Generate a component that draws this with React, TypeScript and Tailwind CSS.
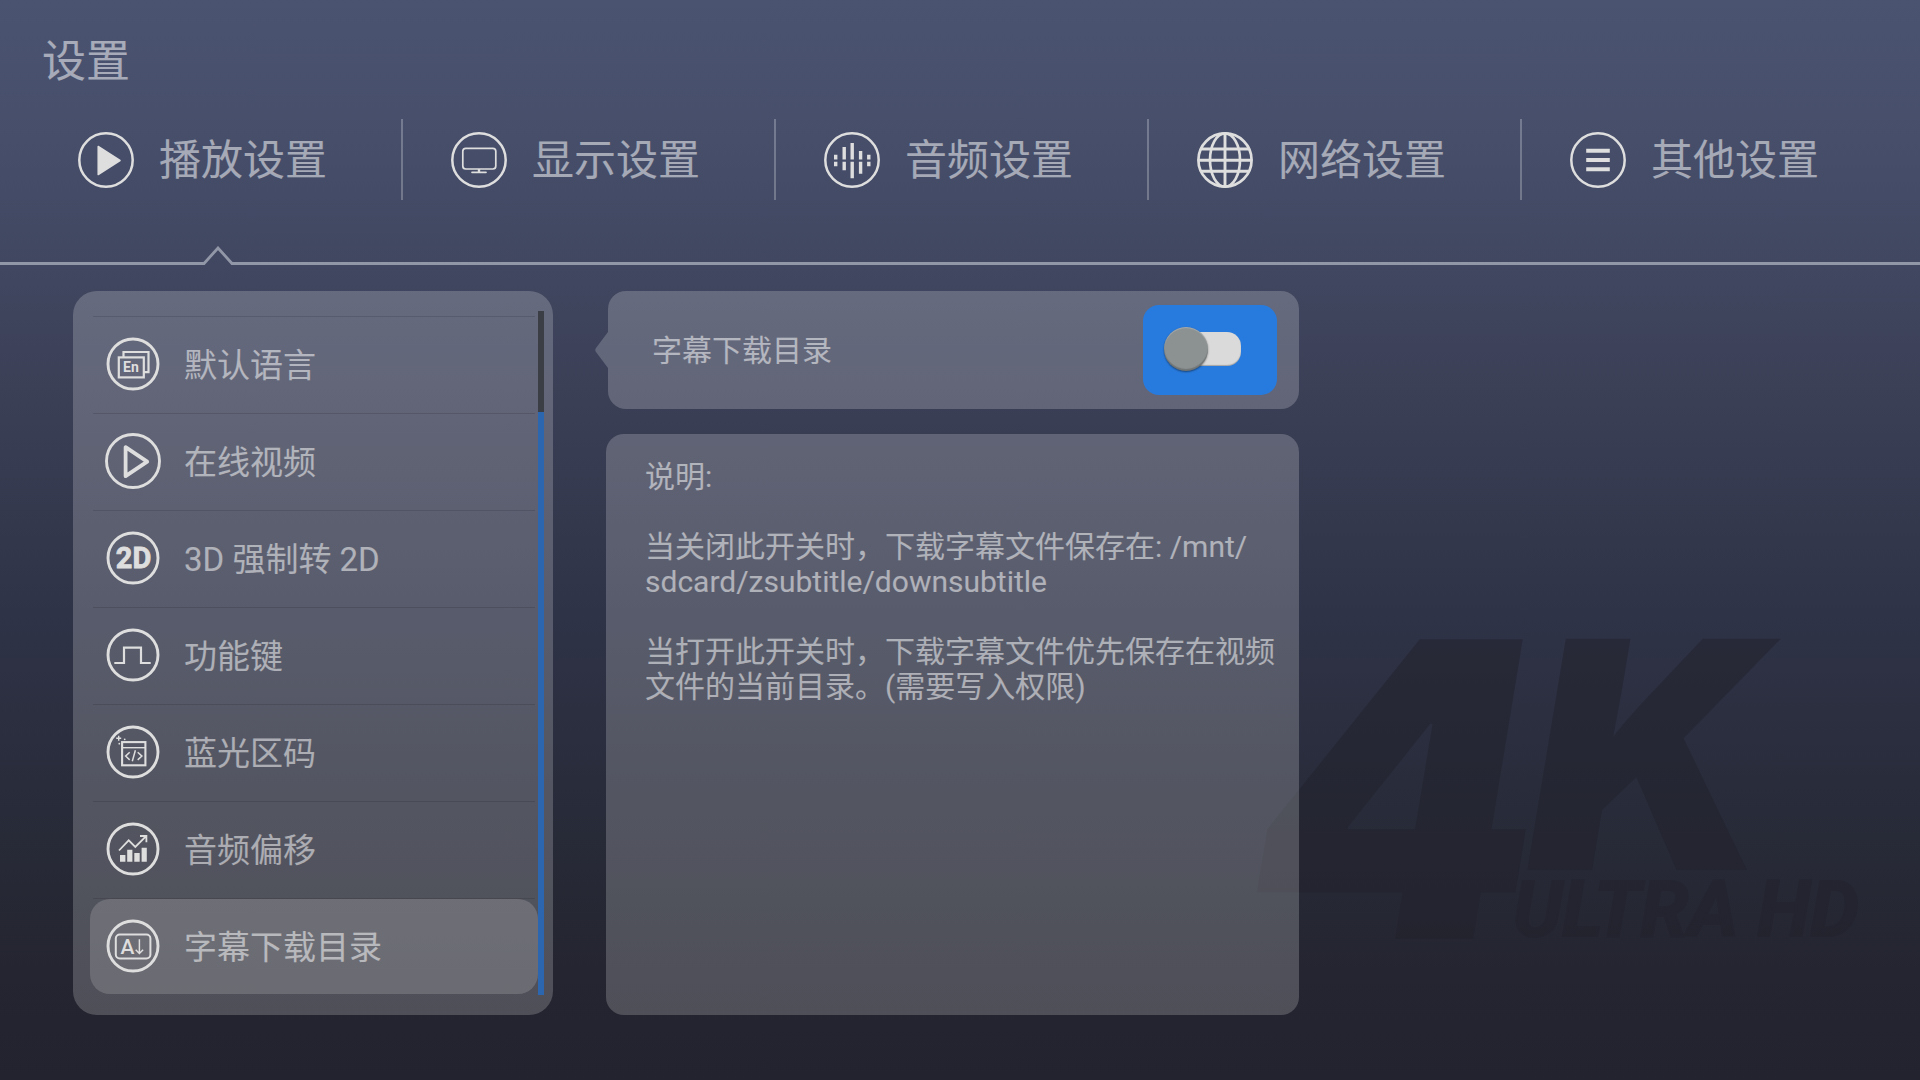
import React, { useState } from "react";

type IconProps = { children: React.ReactNode; radius?: number; ring?: number };

function RingIcon({ children, radius = 25, ring = 2.9 }: IconProps) {
  return (
    <svg viewBox="0 0 56 56" className="size-14 shrink-0 text-[#dedede]" fill="none" stroke="currentColor" aria-hidden="true">
      <circle cx="28" cy="28" r={radius} strokeWidth={ring} />
      {children}
    </svg>
  );
}

const PlaySolid = () => (
  <RingIcon radius={26.7} ring={2.5}>
    <path d="M20.2 14.5 42 28.5 20.2 42.5Z" fill="currentColor" strokeWidth="1.5" strokeLinejoin="round" />
  </RingIcon>
);

const Monitor = () => (
  <RingIcon radius={26.7} ring={2.5}>
    <rect x="11.8" y="16.3" width="33" height="20.7" rx="3" strokeWidth="1.7" />
    <path d="M28 37v3.3" strokeWidth="2.4" />
    <path d="M21 40.3h14" strokeWidth="1.7" strokeLinecap="round" />
  </RingIcon>
);

const AudioBars = () => (
  <RingIcon radius={26.7} ring={2.5}>
    <path
      strokeWidth="3.4"
      d="M11.7 22.8v4.6M11.7 29.8v4.4M20.2 15v12.4M20.2 29.8v8.4M28.2 11v16.4M28.2 29.8v16.4M36.6 19v8.4M36.6 29.8v12M44.8 22.8v4.6M44.8 29.8v4.4"
    />
  </RingIcon>
);

const Globe = () => (
  <RingIcon radius={26.6} ring={2.7}>
    <ellipse cx="28" cy="28" rx="15" ry="26.6" strokeWidth="2.7" />
    <path d="M28 1v54M1 28.2h54M3.8 17h48.4M3.8 39.2h48.4" strokeWidth="2.9" />
  </RingIcon>
);

const Lines = () => (
  <RingIcon radius={26.7} ring={2.5}>
    <path d="M16.2 18.8h23.6M16.2 28h23.6M16.2 37.2h23.6" strokeWidth="4" />
  </RingIcon>
);

const Language = () => (
  <RingIcon>
    <path d="M18.5 21v-5h25v20.2h-4.6" strokeWidth="2.2" />
    <rect x="13.8" y="21.4" width="25" height="20" strokeWidth="2.2" />
    <text x="18" y="36.2" fill="currentColor" stroke="none" className="font-[Roboto] text-[14px] font-bold">
      En
    </text>
  </RingIcon>
);

const PlayOutline = () => (
  <RingIcon radius={26.5}>
    <path d="M20.6 14.2v29L42.2 28.7Z" strokeWidth="3.8" strokeLinejoin="round" />
  </RingIcon>
);

const TwoD = () => (
  <RingIcon>
    <text x="28.6" y="38.4" textAnchor="middle" fill="currentColor" strokeWidth="0.8" className="font-[Roboto] text-[29px] font-bold">
      2D
    </text>
  </RingIcon>
);

const Pulse = () => (
  <RingIcon>
    <path d="M9.3 36H19V20.7h17V36h9.7" strokeWidth="2.2" />
  </RingIcon>
);

const CodeWindow = () => (
  <RingIcon>
    <rect x="17.1" y="18.1" width="23.3" height="23.2" strokeWidth="2.1" />
    <path d="M17 23.7h23.4" strokeWidth="1.4" />
    <path d="m24.7 28.3-4.1 3.8 4.1 3.8M32.7 28.3l4.2 3.8-4.2 3.8M30.4 26.3l-3.1 11" strokeWidth="1.5" />
    <path d="M13.7 11.8v5M11.2 14.3h5" strokeWidth="1.4" />
    <circle cx="19.7" cy="15.3" r="0.9" fill="currentColor" stroke="none" />
    <circle cx="14.3" cy="19.7" r="0.9" fill="currentColor" stroke="none" />
  </RingIcon>
);

const Growth = () => (
  <RingIcon>
    <path d="m14 29.5 9.7-10.1 6.6 6.6 10.6-10.7M35 15h6.4v6.2" strokeWidth="1.8" />
    <path
      d="M15 34h5.4v6.8H15zM22.2 28.7h5.2v12.1h-5.2zM29.3 32h5.4v8.8h-5.4zM36.6 26.7h5.2v14.1h-5.2z"
      fill="currentColor"
      stroke="none"
    />
  </RingIcon>
);

const SubtitleSave = () => (
  <RingIcon>
    <rect x="10.8" y="16.6" width="34.6" height="23.8" rx="4" strokeWidth="2" />
    <text x="15.4" y="36" fill="currentColor" stroke="none" className="font-[Roboto] text-[21px] font-medium">
      A
    </text>
    <path d="M34.4 21.3v14M30.7 31.8l3.7 3.7 3.7-3.7" strokeWidth="1.5" />
  </RingIcon>
);

const tabs = [
  { label: "播放设置", Icon: PlaySolid },
  { label: "显示设置", Icon: Monitor },
  { label: "音频设置", Icon: AudioBars },
  { label: "网络设置", Icon: Globe },
  { label: "其他设置", Icon: Lines },
];

const items = [
  { label: "默认语言", Icon: Language },
  { label: "在线视频", Icon: PlayOutline },
  { label: "3D 强制转 2D", Icon: TwoD },
  { label: "功能键", Icon: Pulse },
  { label: "蓝光区码", Icon: CodeWindow },
  { label: "音频偏移", Icon: Growth },
  { label: "字幕下载目录", Icon: SubtitleSave },
];

function Watermark() {
  return (
    <svg
      viewBox="0 0 626 300"
      className="pointer-events-none absolute right-[71px] bottom-[141px] h-[300px] w-[626px] overflow-visible fill-[#22222c] italic opacity-50"
      aria-hidden="true"
    >
      <text x="28" y="300" className="font-[Inter] text-[412px] font-black">
        4
      </text>
      <text x="304" y="231" className="font-[Inter] text-[318px] font-black">
        K
      </text>
      <text x="290" y="297" className="stroke-[#22222c] stroke-2 font-[Roboto] text-[77px] font-bold">
        ULTRA HD
      </text>
    </svg>
  );
}

function Header() {
  return (
    <header>
      <h1 className="pt-8 pl-[42px] text-[44px] leading-[60px]">设置</h1>
      <nav className="mt-[27px] flex h-[81px] pr-[25px] pl-[30px]" aria-label="设置分类">
        {tabs.map(({ label, Icon }) => (
          <button
            key={label}
            type="button"
            className="flex flex-1 items-center gap-[25px] border-r-2 border-white/25 pl-12 text-[42px] leading-[60px] whitespace-nowrap last:border-transparent"
          >
            <Icon />
            <span className="pt-[3px]">{label}</span>
          </button>
        ))}
      </nav>
      <div className="mt-[46px] flex items-end text-[#9297a8]" aria-hidden="true">
        <div className="h-[3px] w-[203px] bg-current" />
        <svg viewBox="0 0 30 19" className="h-[19px] w-[30px]" fill="none" stroke="currentColor" strokeWidth="2.8">
          <path d="M0 17.5h1L15 2l14 15.5h1" />
        </svg>
        <div className="h-[3px] flex-1 bg-current" />
      </div>
    </header>
  );
}

function Sidebar() {
  const [selected, setSelected] = useState("字幕下载目录");
  return (
    <aside className="ml-[73px] flex w-1/4 rounded-3xl bg-white/20 pt-5 pr-[9px] pb-5 pl-[17px]">
      <ul className="flex-1 pt-[5px]">
        {items.map(({ label, Icon }) => (
          <li key={label} className="pb-px">
            <div className="mx-[3px] h-px bg-black/12" />
            <button
              type="button"
              onClick={() => setSelected(label)}
              className={
                selected === label
                  ? "flex h-[95px] w-full items-center gap-[23px] rounded-[20px] bg-white/16 pb-px pl-[15px] text-[33px] whitespace-nowrap"
                  : "flex h-[95px] w-full items-center gap-[23px] rounded-[20px] pb-px pl-[15px] text-[33px] whitespace-nowrap"
              }
            >
              <Icon />
              <span className="pt-[3px]">{label}</span>
            </button>
          </li>
        ))}
      </ul>
      <div className="flex w-1.5 flex-col bg-[#2c66ae]" aria-hidden="true">
        <div className="h-[101px] bg-[#3b3e45]" />
      </div>
    </aside>
  );
}

function Detail() {
  const [enabled, setEnabled] = useState(false);
  return (
    <section className="ml-[53px] flex w-[36.1%] flex-col gap-[25px]">
      <div className="relative ml-0.5 flex h-[118px] items-center justify-between rounded-[18px] bg-white/20 pr-[22px] pl-11 text-[30px]">
        <svg viewBox="0 0 13 36" className="absolute top-[41px] -left-[13px] h-9 w-[13px] fill-white/20" aria-hidden="true">
          <path d="M13 0 1 16q-1.5 2 0 4l12 16Z" />
        </svg>
        <label htmlFor="subtitle-dir">字幕下载目录</label>
        <div className="flex h-[90px] w-[134px] items-center justify-center rounded-2xl bg-[#287bde] pb-0.5">
          <input
            id="subtitle-dir"
            type="checkbox"
            role="switch"
            checked={enabled}
            onChange={(e) => setEnabled(e.target.checked)}
            className="relative mr-2 h-[34px] w-[70px] appearance-none rounded-[14px] bg-[#dadada] shadow-[inset_0_-1px_1px_rgba(0,0,0,0.25)] before:absolute before:-top-[5px] before:-left-[7px] before:size-11 before:rounded-full before:bg-[#8c9191] before:shadow-[0_1px_2px_rgba(0,0,0,0.45),inset_0_1px_1px_rgba(255,255,255,0.25),inset_0_-2px_1px_rgba(0,0,0,0.2)] checked:before:left-8"
          />
        </div>
      </div>
      <div className="flex flex-1 flex-col gap-[35px] rounded-[18px] bg-white/20 pt-[25px] pr-5 pl-[39px] text-[30px] leading-[35px]">
        <p>说明:</p>
        <p>当关闭此开关时，下载字幕文件保存在: /mnt/<wbr />sdcard/zsubtitle/downsubtitle</p>
        <p>当打开此开关时，下载字幕文件优先保存在视频文件的当前目录。(需要写入权限)</p>
      </div>
    </section>
  );
}

export default function App() {
  return (
    <div
      lang="zh-CN"
      className="relative flex min-h-screen flex-col bg-linear-[180deg,#4a5370_0%,#464e6a_13%,#40465f_26%,#383c52_42%,#2f3347_57%,#282b39_75%,#242530_90%,#22232e_100%] font-[Roboto,'Noto_Sans_CJK_SC',sans-serif] text-white/52"
    >
      <Watermark />
      <Header />
      <main className="relative mt-[26px] flex flex-1 pb-[65px]">
        <Sidebar />
        <Detail />
      </main>
    </div>
  );
}
